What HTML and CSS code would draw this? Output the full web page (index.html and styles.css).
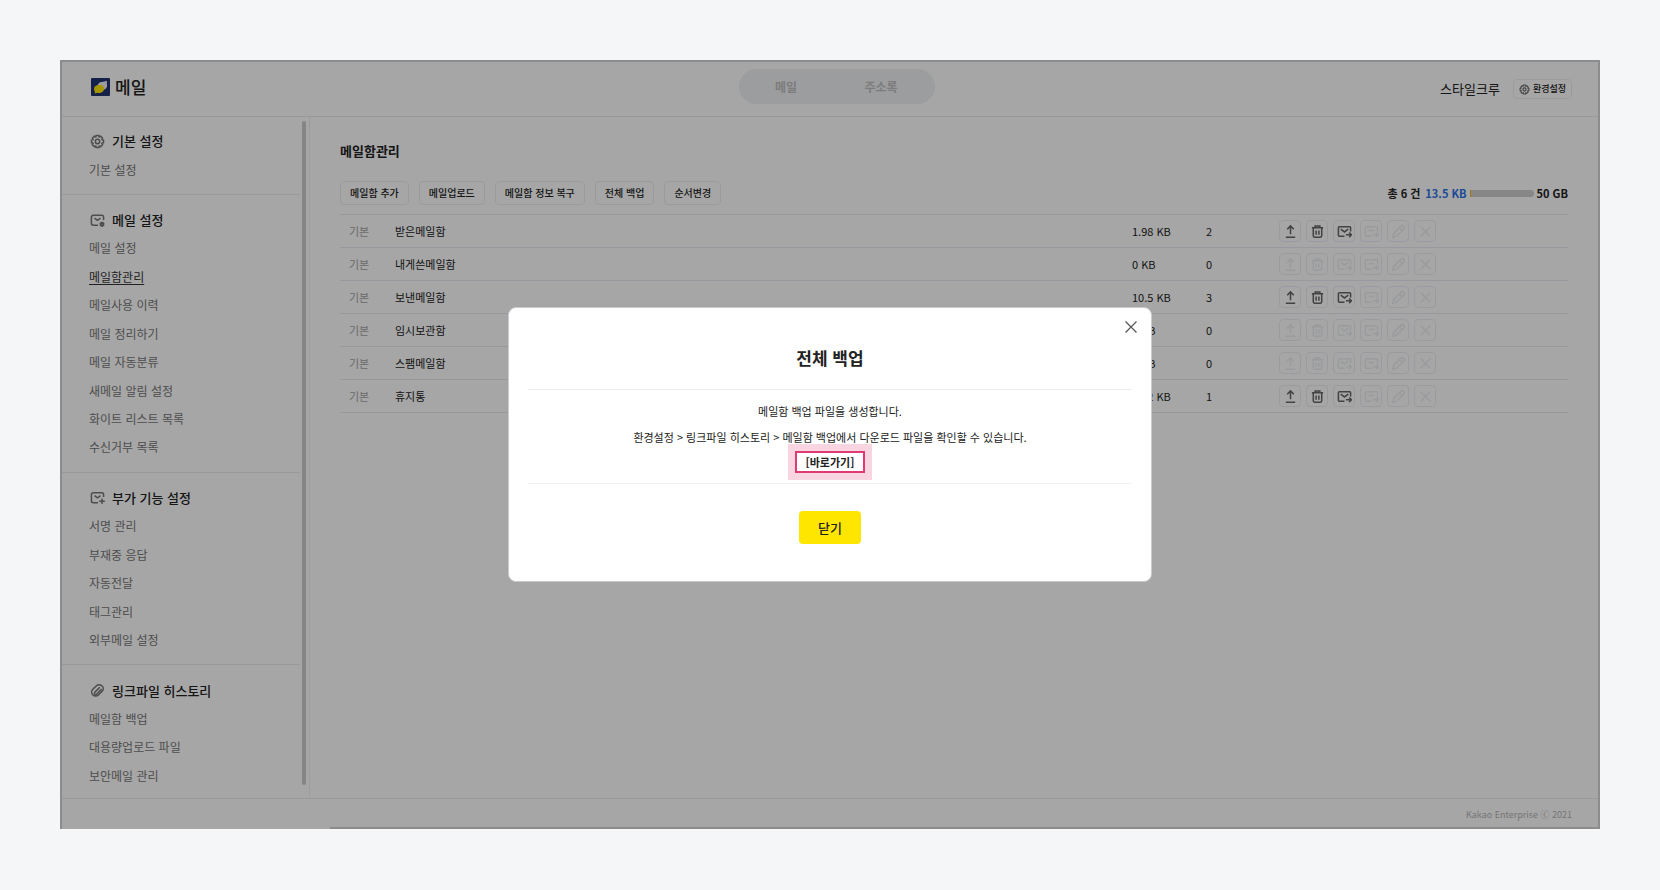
FILE: index.html
```html
<!DOCTYPE html>
<html lang="ko">
<head>
<meta charset="utf-8">
<title>메일함관리</title>
<link rel="stylesheet" href="styles.css">
</head>
<body>
<svg class="defs" aria-hidden="true">
  <symbol id="gear" viewBox="0 0 16 16"><path d="M6.600 1.500h2.800l.5 1.600 1.500-.7 2 2-.7 1.500 1.700.6v2.900l-1.700.6.7 1.500-2 2-1.500-.7-.5 1.700H6.600l-.5-1.700-1.500.7-2-2 .7-1.500-1.700-.6V6.500l1.700-.6-.7-1.500 2-2 1.500.7z"/><circle cx="8" cy="8" r="2.300"/></symbol>
  <symbol id="mail-gear" viewBox="0 0 16 16"><path d="M8.500 13h-5a2 2 0 0 1-2-2V4.500a2 2 0 0 1 2-2h9a2 2 0 0 1 2 2V7.500M4.800 5.500 8 7.800l3.200-2.300"/><circle cx="12.800" cy="12" r="1.700"/><path d="M12.800 9.200v5.600M10.400 10.600l4.800 2.800M10.400 13.400l4.800-2.800"/></symbol>
  <symbol id="mail-plus" viewBox="0 0 16 16"><path d="M8.500 13.500h-5a2 2 0 0 1-2-2V5a2 2 0 0 1 2-2h9a2 2 0 0 1 2 2V7.500M4.800 6 8 8.300 11.200 6M12.800 9v6M9.800 12h6"/></symbol>
  <symbol id="clip" viewBox="0 0 16 16"><path d="M13.300 8.400 9 12.700a4.200 4.200 0 0 1-6-6l3.600-3.500a4.400 4.400 0 0 1 6.300 0 3.700 3.700 0 0 1 .4 5.200M10.500 4.500 5 10a1.300 1.300 0 0 0 2 2l5.500-5.500"/></symbol>
  <symbol id="upload" viewBox="0 0 16 16"><path d="M8 11V2M4.500 5.500 8 2l3.500 3.500M3 14h10"/></symbol>
  <symbol id="trash" viewBox="0 0 16 16"><path d="M2 4h12M5.500 4V2h5v2M3.500 4v8.500a1.500 1.500 0 0 0 1.500 1.500h6a1.500 1.500 0 0 0 1.500-1.500V4M6.500 7v4.500M9.500 7v4.500"/></symbol>
  <symbol id="mail-move" viewBox="0 0 16 16"><path d="M8 13H2.500a1 1 0 0 1-1-1V4a1 1 0 0 1 1-1h11a1 1 0 0 1 1 1v4M4 5.500l4 3 4-3M9.500 11.500H15M13 9l2.500 2.500L13 14"/></symbol>
  <symbol id="mail-minus" viewBox="0 0 16 16"><path d="M8 13H2.500a1 1 0 0 1-1-1V4a1 1 0 0 1 1-1h11a1 1 0 0 1 1 1v4M5 7h6M9.500 11.500H15M13 9l2.500 2.500L13 14"/></symbol>
  <symbol id="pencil" viewBox="0 0 16 16"><path d="M2 14l1-4 7.500-7.500a2 2 0 0 1 3 3L6 13zM9 4l3 3"/></symbol>
  <symbol id="cross" viewBox="0 0 16 16"><path d="M3 3l10 10M13 3L3 13"/></symbol>
</svg>

<div class="app">
  <header class="header">
    <h1 class="logo">
      <svg class="logo-mark" viewBox="0 0 19 18" aria-hidden="true"><rect width="19" height="18" rx="1" fill="#21346f"/><path d="M6.500 7.500C7.500 4.500 10 3.600 12.500 3.800L16 2.800l-.2 2.700C17 9.500 14.500 12 11 12z" fill="#eef2f5"/><path d="M3 11c0-3 3-4.500 6-4 3 0 4.500 2 4 4.500-.5 3-4 4-6.500 3.200L4 15.500l-.2-2A4 4 0 0 1 3 11z" fill="#ffe600"/></svg>
      <span>메일</span>
    </h1>
    <nav class="tabs"><a href="#mail">메일</a><a href="#contacts">주소록</a></nav>
    <div class="account">
      <span class="user">스타일크루</span>
      <button class="settings" type="button"><svg class="icon"><use href="#gear"/></svg>환경설정</button>
    </div>
  </header>

  <div class="body">
    <div class="side">
      <nav class="menu">
        <section class="group rows-2">
          <h2><svg class="icon"><use href="#gear"/></svg>기본 설정</h2>
          <a href="#m">기본 설정</a>
        </section>
        <section class="group rows-9">
          <h2><svg class="icon"><use href="#mail-gear"/></svg>메일 설정</h2>
          <a href="#m">메일 설정</a>
          <a href="#m" class="current" aria-current="page">메일함관리</a>
          <a href="#m">메일사용 이력</a>
          <a href="#m">메일 정리하기</a>
          <a href="#m">메일 자동분류</a>
          <a href="#m">새메일 알림 설정</a>
          <a href="#m">화이트 리스트 목록</a>
          <a href="#m">수신거부 목록</a>
        </section>
        <section class="group rows-6">
          <h2><svg class="icon"><use href="#mail-plus"/></svg>부가 기능 설정</h2>
          <a href="#m">서명 관리</a>
          <a href="#m">부재중 응답</a>
          <a href="#m">자동전달</a>
          <a href="#m">태그관리</a>
          <a href="#m">외부메일 설정</a>
        </section>
        <section class="group rows-4">
          <h2><svg class="icon"><use href="#clip"/></svg>링크파일 히스토리</h2>
          <a href="#m">메일함 백업</a>
          <a href="#m">대용량업로드 파일</a>
          <a href="#m">보안메일 관리</a>
        </section>
      </nav>
      <div class="scroll"></div>
    </div>

    <main class="main">
      <h2 class="title">메일함관리</h2>
      <div class="toolbar">
        <button type="button">메일함 추가</button>
        <button type="button">메일업로드</button>
        <button type="button">메일함 정보 복구</button>
        <button type="button">전체 백업</button>
        <button type="button">순서변경</button>
        <div class="usage"><span>총 6 건</span><span class="used">13.5 KB</span><span class="bar"></span><span>50 GB</span></div>
      </div>
      <table class="boxes">
        <tbody id="rows"></tbody>
      </table>
    </main>
  </div>

  <footer class="footer">Kakao Enterprise ⓒ 2021</footer>

  <div class="overlay">
    <div class="dialog" role="dialog" aria-modal="true" aria-labelledby="dialog-title">
      <button class="close" type="button" aria-label="닫기"><svg viewBox="0 0 12 12"><path d="M.5.5l11 11M11.500.5l-11 11"/></svg></button>
      <h2 id="dialog-title">전체 백업</h2>
      <div class="message">
        <p>메일함 백업 파일을 생성합니다.</p>
        <p>환경설정 &gt; 링크파일 히스토리 &gt; 메일함 백업에서 다운로드 파일을 확인할 수 있습니다.</p>
        <a class="shortcut" href="#backup">[바로가기]</a>
      </div>
      <button class="confirm" type="button">닫기</button>
    </div>
  </div>
</div>
<script src="script.js"></script>
</body>
</html>
```

FILE: script.js
```js
const boxes = [
  ["받은메일함", "1.98 KB", 2],
  ["내게쓴메일함", "0 KB", 0],
  ["보낸메일함", "10.5 KB", 3],
  ["임시보관함", "0 KB", 0],
  ["스팸메일함", "0 KB", 0],
  ["휴지통", "1.02 KB", 1]
];
const actions = [
  ["upload", "백업"],
  ["trash", "비우기"],
  ["mail-move", "메일 이동"],
  ["mail-minus", "메일함 이동"],
  ["pencil", "수정"],
  ["cross", "삭제"]
];
document.getElementById("rows").innerHTML = boxes.map(([name, size, count]) => {
  const buttons = actions.map(([icon, label], i) => {
    const off = count === 0 || i > 2 ? " disabled" : "";
    return `<button type="button" aria-label="${label}"${off}><svg class="icon"><use href="#${icon}"/></svg></button>`;
  }).join("");
  return `<tr><td class="kind">기본</td><td class="name">${name}</td><td class="size">${size}</td><td class="count">${count}</td><td class="actions"><div>${buttons}</div></td></tr>`;
}).join("");
```

FILE: styles.css
```css
* { box-sizing: border-box; }
body {
  margin: 0;
  min-height: 100vh;
  padding: 60px 60px 61px;
  display: flex;
  background: #f4f6f8;
  color: #222;
  font-family: "Noto Sans CJK KR", sans-serif;
  font-size: 11px;
  line-height: 16px;
}
h1, h2, p { margin: 0; }
a { color: inherit; text-decoration: none; }
button {
  font: inherit;
  color: inherit;
  background: none;
  border: 1px solid #edeff5;
  border-radius: 4px;
  padding: 0;
  cursor: pointer;
}
.defs { display: none; }
.icon {
  width: 16px;
  height: 16px;
  flex: none;
  fill: none;
  stroke: currentColor;
  stroke-width: 1.6;
}

.app {
  position: relative;
  flex: 1;
  min-width: 0;
  display: flex;
  flex-direction: column;
  background: #fff;
  border: 2px solid #d7d7d7;
  border-bottom: 0;
}

.header {
  display: grid;
  grid-template-columns: 1fr auto 1fr;
  align-items: center;
  height: 55px;
  padding: 0 26px 0 29px;
  border-bottom: 1px solid #e9ebf5;
}
.logo {
  display: flex;
  align-items: center;
  gap: 5px;
  padding-bottom: 4px;
  font-size: 17px;
  line-height: 24px;
  font-weight: 500;
}
.logo-mark { width: 19px; height: 18px; }
.tabs {
  display: flex;
  margin: 0 0 5px 10px;
  padding-right: 6px;
  border-radius: 18px;
  background: #eff1f4;
  color: #bfbfbf;
  font-size: 12px;
  font-weight: 700;
}
.tabs a { width: 95px; line-height: 35px; text-align: center; }
.account {
  display: flex;
  justify-content: flex-end;
  align-items: center;
  gap: 13px;
}
.user { font-size: 13px; }
.settings {
  display: flex;
  align-items: center;
  gap: 3px;
  height: 20px;
  padding: 0 5px;
  font-size: 9px;
  font-weight: 500;
}
.settings .icon { width: 11px; height: 11px; color: #666; }

.body { flex: 1; display: flex; }
.side {
  width: 248px;
  flex: none;
  display: flex;
  border-right: 1px solid #f2f2f4;
}
.menu {
  flex: 1;
  display: flex;
  flex-direction: column;
  padding-bottom: 8px;
}
.group {
  display: flex;
  flex-direction: column;
  padding: 11px 0 10px 27px;
  border-top: 1px solid #ededf1;
}
.group:first-child { border-top: 0; padding-top: 10px; }
.group:last-child { padding-bottom: 0; }
.rows-2 { flex: 2 1 auto; }
.rows-9 { flex: 9 1 auto; }
.rows-6 { flex: 6 1 auto; }
.rows-4 { flex: 4 1 auto; }
.group h2, .group a {
  flex: 1 1 20px;
  display: flex;
  align-items: center;
  font-size: 12px;
  color: #777;
}
.group h2 {
  gap: 7px;
  padding-left: 1px;
  font-size: 13px;
  font-weight: 500;
  color: #222;
}
.group h2 .icon { width: 15px; height: 15px; color: #777; }
.group .current { color: #333; text-decoration: underline; text-underline-offset: 2px; }
.scroll {
  width: 4px;
  margin: 4px 3px 13px 2px;
  border-radius: 2px;
  background: #cdcdcd;
}

.main { flex: 1; min-width: 0; padding: 25px 30px 0; }
.title { font-size: 13px; line-height: 18px; font-weight: 700; }
.toolbar {
  display: flex;
  align-items: center;
  gap: 10px;
  margin: 21px 0 9px;
}
.toolbar button {
  height: 24px;
  padding: 0 9px;
  font-size: 10px;
  font-weight: 500;
  white-space: nowrap;
}
.usage {
  margin-left: auto;
  display: flex;
  align-items: center;
  gap: 3px;
  font-weight: 700;
  white-space: nowrap;
}
.used { margin-left: 2px; color: #2f74e6; }
.bar {
  width: 64px;
  height: 7px;
  border-radius: 0 3px 3px 0;
  background: linear-gradient(to right, #ffb000 1px, #d0d0d0 1px);
}
.boxes {
  width: 100%;
  border-collapse: collapse;
  table-layout: fixed;
  border-top: 1px solid #e9ebf3;
}
.boxes td {
  height: 33px;
  padding: 0;
  border-bottom: 1px solid #e9ebf3;
}
.boxes .kind { width: 55px; padding-left: 9px; color: #a5a5a5; }
.boxes .size { width: 74px; }
.boxes .count { width: 73px; }
.boxes .actions { width: 289px; }
.actions div { display: flex; gap: 5px; }
.actions button {
  display: grid;
  place-items: center;
  width: 22px;
  height: 22px;
  color: #666;
}
.actions button:disabled { color: #eceef2; cursor: default; }
.actions .icon { width: 15px; height: 15px; }

.footer {
  height: 31px;
  padding: 0 26px;
  border-top: 1px solid #ebebed;
  color: #b5b5b5;
  font-size: 9px;
  line-height: 32px;
  text-align: right;
}

.overlay {
  position: absolute;
  inset: -2px;
  bottom: 0;
  display: grid;
  place-items: center;
  background: rgba(0, 0, 0, .35);
}
.overlay::after {
  content: "";
  position: absolute;
  left: 270px;
  right: 0;
  bottom: 0;
  height: 2px;
  background: #8c8c8c;
}
.dialog {
  position: relative;
  width: 644px;
  max-width: 100%;
  padding: 38px 19px 37px;
  border: 1px solid #c9cace;
  border-radius: 8px;
  background: #fff;
  text-align: center;
}
.close {
  position: absolute;
  top: 13px;
  right: 14px;
  display: grid;
  border: 0;
}
.close svg {
  width: 12px;
  height: 12px;
  fill: none;
  stroke: #555;
  stroke-width: 1.2;
}
.dialog h2 {
  font-size: 17px;
  line-height: 24px;
  font-weight: 700;
  padding-bottom: 19px;
}
.message {
  display: flex;
  flex-direction: column;
  align-items: center;
  padding: 13px 0 10px;
  border-top: 1px solid #ececec;
  border-bottom: 1px solid #f2f2f2;
}
.message p { padding-bottom: 10px; }
.message p + p { padding-bottom: 6px; }
.shortcut {
  padding: 0 9px;
  border: 2px solid #df3b72;
  box-shadow: 0 0 0 7px #f9d5e1;
  line-height: 18px;
  font-weight: 700;
}
.confirm {
  width: 62px;
  height: 33px;
  margin-top: 27px;
  border: 0;
  background: #ffe600;
  font-size: 13px;
  font-weight: 500;
}
```
